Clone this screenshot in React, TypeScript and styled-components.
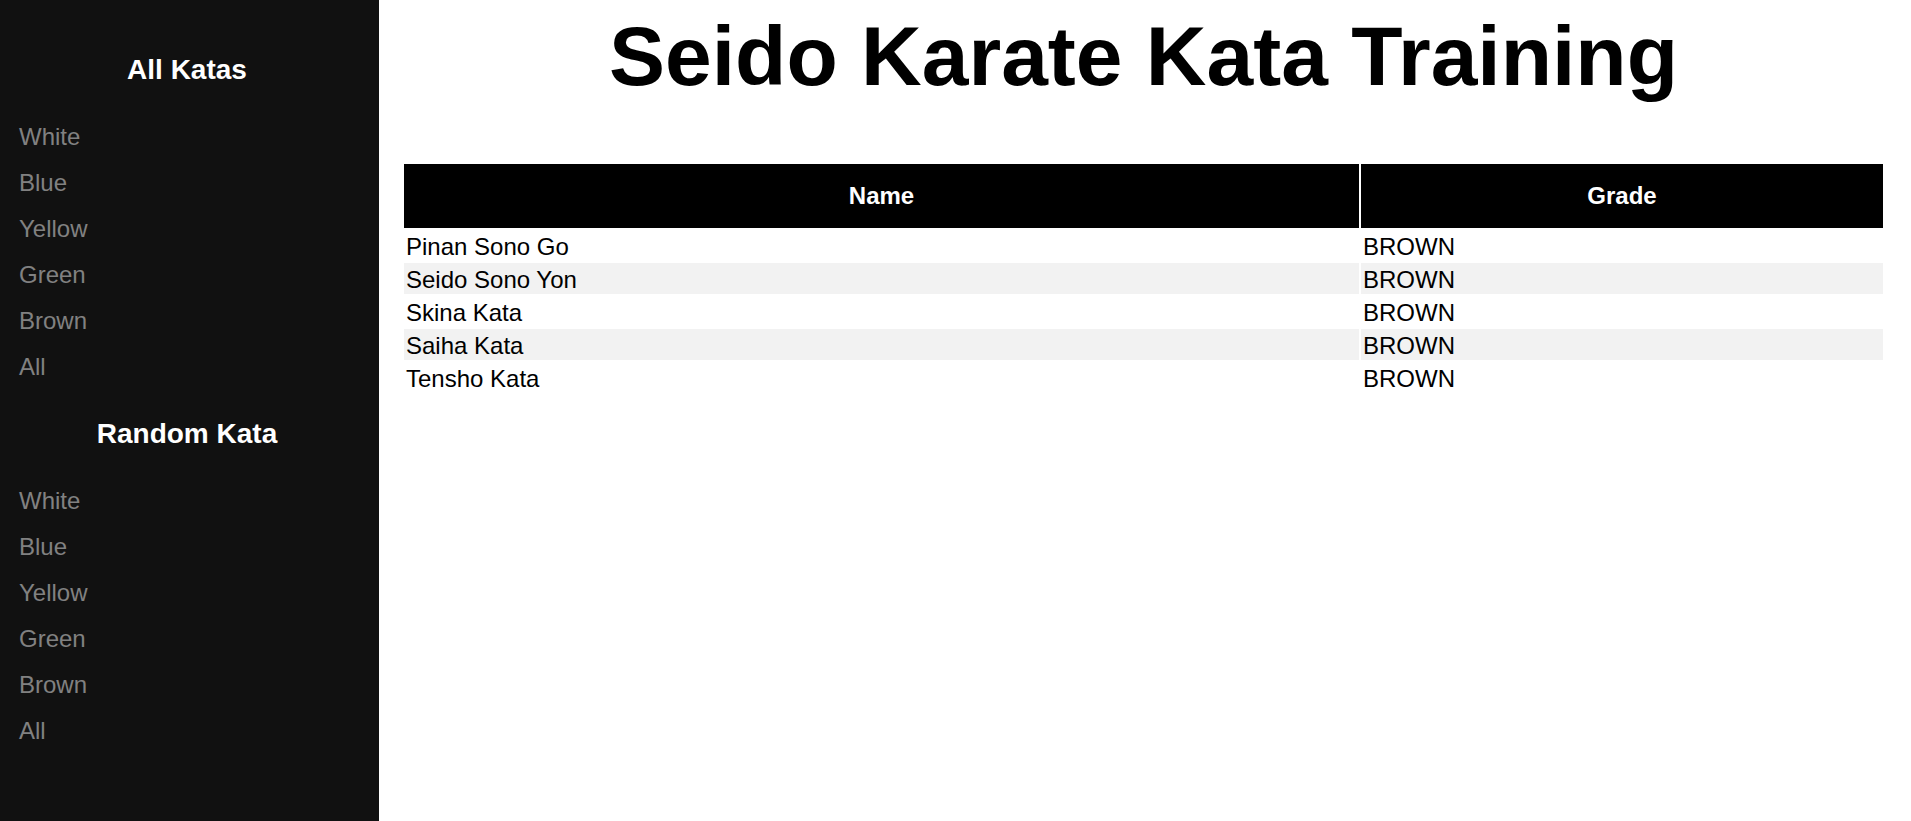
import React from "react";
import styled, { createGlobalStyle } from "styled-components";

const GlobalStyle = createGlobalStyle`
  html, body {
    margin: 0;
    padding: 0;
    background: #ffffff;
    font-family: "Liberation Sans", Arial, Helvetica, sans-serif;
    overflow: hidden;
  }
`;

const Page = styled.div`
  display: flex;
  width: 100%;
  height: 100vh;
`;

const Sidebar = styled.nav`
  flex: 0 0 379px;
  height: 100%;
  background: #111111;
  padding-top: 54px;
  box-sizing: border-box;
  display: flex;
  flex-direction: column;
`;

const SideSection = styled.section`
  display: flex;
  flex-direction: column;
  gap: 28px;
  margin-bottom: 28px;
`;

const SideHeading = styled.h2`
  margin: 0;
  padding-right: 5px;
  font-size: 28px;
  line-height: 32px;
  font-weight: 700;
  color: #ffffff;
  text-align: center;
`;

const LinkList = styled.div`
  display: flex;
  flex-direction: column;
`;

const SideLink = styled.a`
  display: block;
  padding: 9px 8px 9px 19px;
  font-size: 24px;
  line-height: 28px;
  color: #818181;
  text-decoration: none;
  cursor: pointer;
`;

const Main = styled.main`
  flex: 1 1 auto;
  min-width: 0;
  padding: 8px 26px 0 23px;
  box-sizing: border-box;
`;

const Title = styled.h1`
  margin: 0 0 58px;
  font-size: 84px;
  line-height: 96px;
  font-weight: 700;
  color: #000000;
  text-align: center;
`;

const Table = styled.table`
  width: 100%;
  table-layout: fixed;
  border-collapse: separate;
  border-spacing: 2px;
  font-size: 24px;
`;

const HeadCell = styled.th<{ $w?: number }>`
  box-sizing: border-box;
  width: ${(p) => (p.$w ? `${p.$w}px` : "auto")};
  height: 64px;
  padding: 0;
  background: #000000;
  color: #ffffff;
  font-weight: 700;
  font-size: 24px;
  text-align: center;
  vertical-align: middle;
`;

const Row = styled.tr<{ $striped: boolean }>`
  & > td {
    background: ${(p) => (p.$striped ? "#f2f2f2" : "#ffffff")};
  }
`;

const Cell = styled.td`
  padding: 2px 1px 0 2px;
  line-height: 29px;
  color: #000000;
  text-align: left;
`;

const grades = ["White", "Blue", "Yellow", "Green", "Brown", "All"];

const katas = [
  { name: "Pinan Sono Go", grade: "BROWN" },
  { name: "Seido Sono Yon", grade: "BROWN" },
  { name: "Skina Kata", grade: "BROWN" },
  { name: "Saiha Kata", grade: "BROWN" },
  { name: "Tensho Kata", grade: "BROWN" },
];

export default function App() {
  return (
    <>
      <GlobalStyle />
      <Page>
        <Sidebar>
          <SideSection>
            <SideHeading>All Katas</SideHeading>
            <LinkList>
              {grades.map((g) => (
                <SideLink key={g}>{g}</SideLink>
              ))}
            </LinkList>
          </SideSection>
          <SideSection>
            <SideHeading>Random Kata</SideHeading>
            <LinkList>
              {grades.map((g) => (
                <SideLink key={g}>{g}</SideLink>
              ))}
            </LinkList>
          </SideSection>
        </Sidebar>
        <Main>
          <Title>Seido Karate Kata Training</Title>
          <Table>
            <thead>
              <tr>
                <HeadCell $w={955}>Name</HeadCell>
                <HeadCell>Grade</HeadCell>
              </tr>
            </thead>
            <tbody>
              {katas.map((k, i) => (
                <Row key={k.name} $striped={i % 2 === 1}>
                  <Cell>{k.name}</Cell>
                  <Cell>{k.grade}</Cell>
                </Row>
              ))}
            </tbody>
          </Table>
        </Main>
      </Page>
    </>
  );
}
